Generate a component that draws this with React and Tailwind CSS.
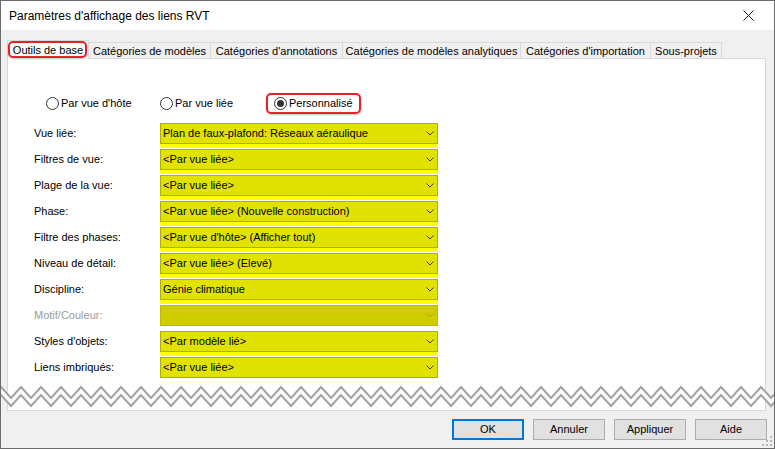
import React from "react";

const tabs = [
  { label: "Catégories de modèles", w: "w-[123px]" },
  { label: "Catégories d'annotations", w: "w-[133px]" },
  { label: "Catégories de modèles analytiques", w: "w-[179px]" },
  { label: "Catégories d'importation", w: "w-[131px]" },
  { label: "Sous-projets", w: "w-[72px]" },
];

const rows = [
  { label: "Vue liée:", value: "Plan de faux-plafond: Réseaux aéraulique" },
  { label: "Filtres de vue:", value: "<Par vue liée>" },
  { label: "Plage de la vue:", value: "<Par vue liée>" },
  { label: "Phase:", value: "<Par vue liée> (Nouvelle construction)" },
  { label: "Filtre des phases:", value: "<Par vue d'hôte> (Afficher tout)" },
  { label: "Niveau de détail:", value: "<Par vue liée> (Elevé)" },
  { label: "Discipline:", value: "Génie climatique" },
  { label: "Motif/Couleur:", value: "", disabled: true },
  { label: "Styles d'objets:", value: "<Par modèle lié>" },
  { label: "Liens imbriqués:", value: "<Par vue liée>", last: true },
];

function Chevron({ disabled }) {
  return (
    <svg width="8" height="5" viewBox="0 0 8 5" className="mr-[3px] shrink-0">
      <path
        d="M0.5 0.5 L4 4 L7.5 0.5"
        fill="none"
        stroke={disabled ? "#a8a600" : "#3c3c20"}
        strokeWidth="1"
      />
    </svg>
  );
}

function Radio({ checked, label }) {
  return (
    <div className="flex items-center">
      <span className="w-[13px] h-[13px] rounded-full border border-[#333333] bg-white flex items-center justify-center">
        {checked && <span className="w-[7px] h-[7px] rounded-full bg-[#333333]" />}
      </span>
      <span className="ml-[2px] text-black">{label}</span>
    </div>
  );
}

function zigzag(offset) {
  const pts = [];
  for (let x = -20, i = 0; x <= 800; x += 10, i++) {
    pts.push([x, (i % 2 === 0 ? 5 : 16) + offset]);
  }
  return pts;
}

function TornEdge() {
  const top = zigzag(0);
  const bottom = zigzag(8);
  const band = [...top, ...bottom.slice().reverse()].map((p) => p.join(",")).join(" ");
  return (
    <svg
      className="absolute left-0 top-[381px] pointer-events-none"
      width="775"
      height="30"
      viewBox="0 0 775 30"
    >
      <polygon points={band} fill="#ffffff" />
      <polyline points={top.map((p) => p.join(",")).join(" ")} fill="none" stroke="#a3a3a3" strokeWidth="2" />
      <polyline points={bottom.map((p) => p.join(",")).join(" ")} fill="none" stroke="#a3a3a3" strokeWidth="2" />
    </svg>
  );
}

export default function App() {
  return (
    <div className="relative w-[775px] h-[449px] overflow-hidden bg-[#f0f0f0] border border-[#6b6b6b] font-['Liberation_Sans',Arial,sans-serif] text-[11px] text-black leading-none">
      {/* title bar */}
      <div className="h-[29px] bg-white flex items-center justify-between pl-[8px] pr-[20px]">
        <span className="text-[12px] text-black">Paramètres d'affichage des liens RVT</span>
        <svg width="11" height="11" viewBox="0 0 11 11">
          <path d="M0.5 0.5 L10.5 10.5 M10.5 0.5 L0.5 10.5" stroke="#1a1a1a" strokeWidth="1" />
        </svg>
      </div>

      <div className="pl-[6px] pt-[10px]">
        {/* tab strip */}
        <div className="flex items-end h-[18px]">
          <div className="relative z-10 w-[82px] h-[19px] -mb-px bg-white border-t border-l border-r border-[#d9d9d9] flex items-center justify-center">
            <span>Outils de base</span>
            <span className="absolute left-0 top-0 right-[1px] bottom-[1px] rounded-[5px] border-2 border-[#e8202a] shadow-[0_1px_2px_rgba(0,0,0,0.25)]" />
          </div>
          {tabs.map((t) => (
            <div
              key={t.label}
              className={`${t.w} -ml-px h-[16px] bg-[#f0f0f0] border-t border-l border-r border-[#d9d9d9] flex items-center justify-center pt-px`}
            >
              {t.label}
            </div>
          ))}
        </div>

        {/* tab page */}
        <div className="w-[759px] h-[353px] bg-white border border-[#d9d9d9] pt-[34px]">
          <div className="flex items-center h-[21px] pl-[38px]">
            <div className="w-[114px]">
              <Radio label="Par vue d'hôte" />
            </div>
            <div className="w-[106px]">
              <Radio label="Par vue liée" />
            </div>
            <div className="w-[95px] h-[21px] flex items-center pl-[6px] rounded-[5px] border-2 border-[#e8202a] shadow-[0_1px_2px_rgba(0,0,0,0.25)]">
              <Radio checked label="Personnalisé" />
            </div>
          </div>

          <div className="mt-[9px] pl-[26px] flex flex-col gap-px">
            {rows.map((r) => (
              <div key={r.label} className="flex items-start">
                <div
                  className={`w-[126px] h-[21px] flex items-center ${r.disabled ? "text-[#9a9a9a]" : "text-black"}`}
                >
                  {r.label}
                </div>
                <div className="flex flex-col w-[278px]">
                  <div
                    className={`h-[21px] flex items-center justify-between pl-[2px] border ${
                      r.disabled ? "bg-[#cfcc00] border-[#bcb900]" : "bg-[#e2e200] border-[#b0b000]"
                    }`}
                  >
                    <span className="whitespace-nowrap">{r.value}</span>
                    <Chevron disabled={r.disabled} />
                  </div>
                  {!r.last && (
                    <div className={`h-[4px] ${r.disabled ? "bg-white" : "bg-[#ffff00]"}`} />
                  )}
                </div>
              </div>
            ))}
          </div>
        </div>

        {/* dialog buttons */}
        <div className="mt-[8px] flex justify-end gap-[9px] pr-[7px]">
          <button className="w-[72px] h-[21px] bg-[#e1e1e1] border-2 border-[#0078d7] text-black">OK</button>
          <button className="w-[72px] h-[21px] bg-[#e1e1e1] border border-[#adadad] text-black">Annuler</button>
          <button className="w-[72px] h-[21px] bg-[#e1e1e1] border border-[#adadad] text-black">Appliquer</button>
          <button className="w-[72px] h-[21px] bg-[#e1e1e1] border border-[#adadad] text-black">Aide</button>
        </div>
      </div>

      <TornEdge />

      {/* size grip */}
      <svg className="absolute right-[1px] bottom-[1px]" width="11" height="11" viewBox="0 0 11 11">
        <rect x="8" y="8" width="2" height="2" fill="#b5b5b5" />
        <rect x="4" y="8" width="2" height="2" fill="#b5b5b5" />
        <rect x="0" y="8" width="2" height="2" fill="#b5b5b5" />
        <rect x="8" y="4" width="2" height="2" fill="#b5b5b5" />
        <rect x="4" y="4" width="2" height="2" fill="#b5b5b5" />
        <rect x="8" y="0" width="2" height="2" fill="#b5b5b5" />
      </svg>
    </div>
  );
}
